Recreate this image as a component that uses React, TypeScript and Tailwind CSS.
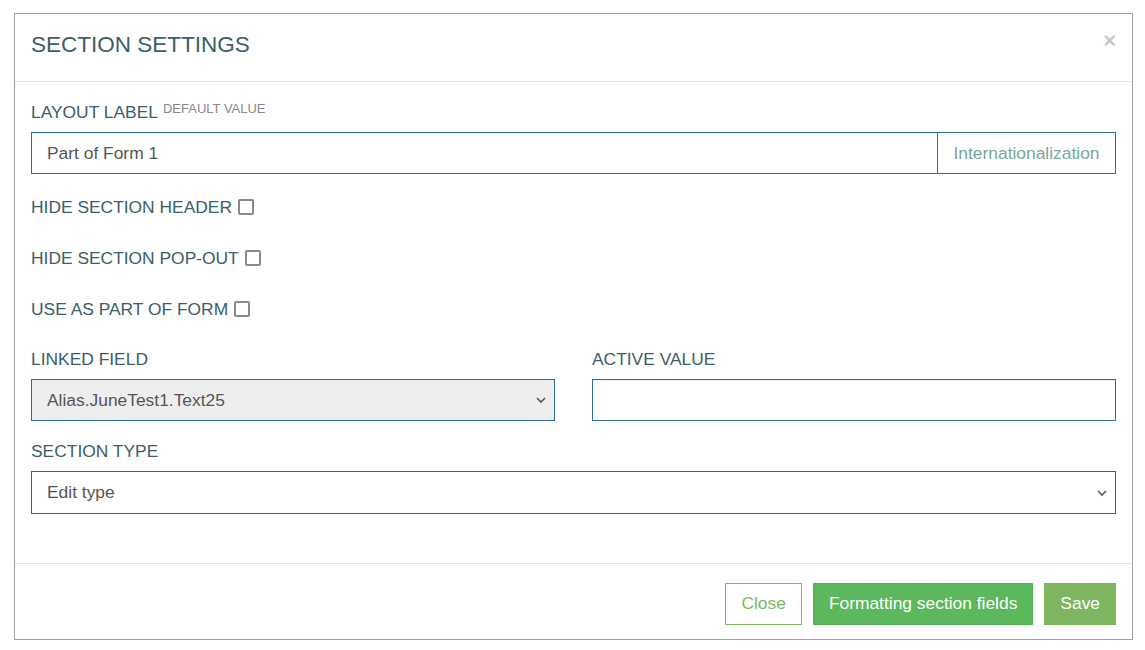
import React, { useState } from 'react';

const labelCls = 'text-[17.4px] leading-[20px] text-[#3b5e68] uppercase';

const Chevron: React.FC = () => (
  <svg width="12" height="8" viewBox="0 0 12 8" className="text-[#555]">
    <path d="M2 2 L6 6 L10 2" fill="none" stroke="currentColor" strokeWidth="1.6" />
  </svg>
);

const CheckRow: React.FC<{ label: string }> = ({ label }) => {
  const [checked, setChecked] = useState(false);
  return (
    <div className="flex items-center h-[51px]">
      <span className={labelCls}>{label}</span>
      <button
        onClick={() => setChecked(!checked)}
        className={`ml-[6px] w-[16px] h-[16px] rounded-[2px] border-2 border-[#8a8790] ${checked ? 'bg-[#3b5e68]' : 'bg-white'}`}
      />
    </div>
  );
};

const SectionSettings: React.FC = () => {
  const [label, setLabel] = useState('Part of Form 1');
  const [activeValue, setActiveValue] = useState('');

  return (
    <div className="w-[1145px] h-[650px] bg-white pt-[13px] pl-[14px]" style={{ fontFamily: '"Liberation Sans", Arial, sans-serif' }}>
      <div className="w-[1119px] h-[627px] border border-[#a0a0a0] bg-white flex flex-col">
        <div className="h-[68px] border-b border-[#e5e5e5] flex items-center justify-between pl-[16px] pr-[16px]">
          <h3 className="text-[22.5px] text-[#3b5e68] leading-none -mt-[4px]">SECTION SETTINGS</h3>
          <span className="text-[#c8c8c8] text-[22px] font-bold leading-none -mt-[14px]">×</span>
        </div>

        <div className="flex-1 px-[16px] pt-[20px]">
          <div className="flex items-start">
            <span className={labelCls}>LAYOUT LABEL</span>
            <span className="ml-[5px] -mt-[3px] text-[13px] text-[#888] uppercase">DEFAULT VALUE</span>
          </div>
          <div className="mt-[10px] flex h-[42px] border border-[#2f6f9f]">
            <input
              value={label}
              onChange={e => setLabel(e.target.value)}
              className="flex-1 px-[15px] text-[17.4px] text-[#555] outline-none shadow-[inset_0_1px_1px_rgba(0,0,0,0.075)]"
            />
            <div className="w-[178px] border-l border-[#2f6f9f] flex items-center justify-center text-[17.4px] text-[#7aa59f]">
              Internationalization
            </div>
          </div>

          <div className="mt-[7px]">
            <CheckRow label="HIDE SECTION HEADER" />
            <CheckRow label="HIDE SECTION POP-OUT" />
            <CheckRow label="USE AS PART OF FORM" />
          </div>

          <div className="mt-[15px] grid grid-cols-2 gap-x-[37px]">
            <div>
              <div className={labelCls}>LINKED FIELD</div>
              <div className="mt-[10px] h-[42px] border border-[#2f6f9f] bg-[#eeeeee] flex items-center justify-between pl-[15px] pr-[7px]">
                <span className="text-[17.4px] text-[#555]">Alias.JuneTest1.Text25</span>
                <Chevron />
              </div>
            </div>
            <div>
              <div className={labelCls}>ACTIVE VALUE</div>
              <input
                value={activeValue}
                onChange={e => setActiveValue(e.target.value)}
                className="mt-[10px] w-full h-[42px] border border-[#2f6f9f] px-[15px] text-[17.4px] text-[#555] outline-none shadow-[inset_0_1px_1px_rgba(0,0,0,0.075)]"
              />
            </div>
          </div>

          <div className="mt-[20px]">
            <div className={labelCls}>SECTION TYPE</div>
            <div className="mt-[10px] h-[43px] border border-[#3b6585] bg-white flex items-center justify-between pl-[15px] pr-[7px]">
              <span className="text-[17.4px] text-[#555]">Edit type</span>
              <Chevron />
            </div>
          </div>
        </div>

        <div className="h-[76px] border-t border-[#e5e5e5] flex items-center justify-end gap-[11px] px-[16px] pt-[4px]">
          <button className="h-[42px] px-[15px] border border-[#7cb861] text-[#7cb861] text-[17.4px] bg-white">Close</button>
          <button className="h-[42px] px-[15px] border border-[#4cae4c] bg-[#5cb85c] text-white text-[17.4px]">Formatting section fields</button>
          <button className="h-[42px] px-[15px] border border-[#7eb560] bg-[#7eb560] text-white text-[17.4px]">Save</button>
        </div>
      </div>
    </div>
  );
};

export default SectionSettings;
